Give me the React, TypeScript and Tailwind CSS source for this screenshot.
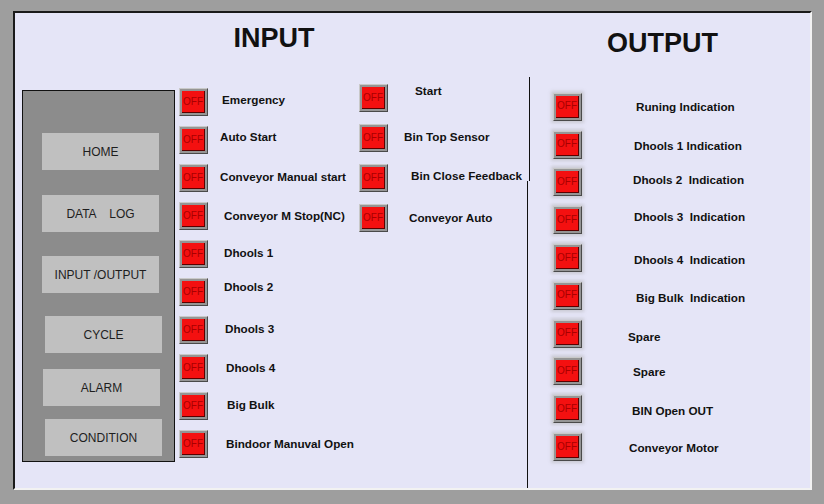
const font = "font-['Liberation_Sans',Arial,sans-serif]";

type Row = { label: string; lx: string; ly: string };

// left column of inputs
const inputsA: Row[] = [
  { label: "Emergency", lx: "ml-[14px]", ly: "mb-[4px]" },
  { label: "Auto Start", lx: "ml-[12px]", ly: "mb-[6px]" },
  { label: "Conveyor Manual start", lx: "ml-[12px]", ly: "mb-[2px]" },
  { label: "Conveyor M Stop(NC)", lx: "ml-[16px]", ly: "mb-0" },
  { label: "Dhools 1", lx: "ml-[16px]", ly: "mb-[2px]" },
  { label: "Dhools 2", lx: "ml-[16px]", ly: "mb-[10px]" },
  { label: "Dhools 3", lx: "ml-[17px]", ly: "mb-[2px]" },
  { label: "Dhools 4", lx: "ml-[18px]", ly: "mb-0" },
  { label: "Big Bulk", lx: "ml-[19px]", ly: "mb-[2px]" },
  { label: "Bindoor Manuval Open", lx: "ml-[18px]", ly: "mb-0" },
];

// second column of inputs
const inputsB: Row[] = [
  { label: "Start", lx: "ml-[27px]", ly: "mb-[14px]" },
  { label: "Bin Top Sensor", lx: "ml-[16px]", ly: "mb-[2px]" },
  { label: "Bin Close Feedback", lx: "ml-[23px]", ly: "mb-[4px]" },
  { label: "Conveyor Auto", lx: "ml-[21px]", ly: "mb-0" },
];

const outputs: Row[] = [
  { label: "Runing Indication", lx: "ml-[54px]", ly: "mb-0" },
  { label: "Dhools 1 Indication", lx: "ml-[52px]", ly: "mt-[2px]" },
  { label: "Dhools 2  Indication", lx: "ml-[51px]", ly: "mb-[6px]" },
  { label: "Dhools 3  Indication", lx: "ml-[52px]", ly: "mb-[8px]" },
  { label: "Dhools 4  Indication", lx: "ml-[52px]", ly: "mt-[4px]" },
  { label: "Big Bulk  Indication", lx: "ml-[54px]", ly: "mt-[4px]" },
  { label: "Spare", lx: "ml-[46px]", ly: "mt-[6px]" },
  { label: "Spare", lx: "ml-[51px]", ly: "mb-0" },
  { label: "BIN Open OUT", lx: "ml-[50px]", ly: "mt-[2px]" },
  { label: "Conveyor Motor", lx: "ml-[47px]", ly: "mt-[2px]" },
];

const navItems = [
  { label: "HOME", cls: "ml-[19px] mt-0" },
  { label: "DATA    LOG", cls: "ml-[19px] mt-[25px]" },
  { label: "INPUT /OUTPUT", cls: "ml-[19px] mt-[24px]" },
  { label: "CYCLE", cls: "ml-[22px] mt-[23px]" },
  { label: "ALARM", cls: "ml-[20px] mt-[16px]" },
  { label: "CONDITION", cls: "ml-[22px] mt-[13px]" },
];

const OffButton = ({ glow = false }: { glow?: boolean }) => (
  <div
    className={`flex h-[28px] w-[29px] shrink-0 border border-t-[#c9c9c9] border-l-[#c9c9c9] border-b-[#4a4a4a] border-r-[#4a4a4a] bg-[#959595] p-[2px] ${
      glow ? "shadow-[0_0_3px_2px_rgba(170,170,170,0.45)]" : ""
    }`}
  >
    <div className="flex flex-1 items-center justify-center border-b border-r border-b-[#5a0000] border-r-[#5a0000] bg-[#f41010]">
      <span className="text-[10px] leading-none text-[#a80000]">OFF</span>
    </div>
  </div>
);

const IoRow = ({ row, h, glow }: { row: Row; h: string; glow?: boolean }) => (
  <div className={`flex items-center ${h}`}>
    <OffButton glow={glow} />
    <span
      className={`whitespace-pre text-[11.7px] font-bold text-[#111] ${row.lx} ${row.ly}`}
    >
      {row.label}
    </span>
  </div>
);

export default function App() {
  return (
    <div className={`h-[504px] w-[824px] bg-[#9e9e9e] pl-[13px] pt-[11px] ${font}`}>
      <div className="flex h-[479px] w-[799px] border-2 border-t-[#1a1a1a] border-l-[#1a1a1a] border-b-[#f2f2f2] border-r-[#f2f2f2] bg-[#e5e5f7]">
        {/* INPUT side */}
        <div className="flex w-[512px] flex-col">
          <div className="h-[64px] pl-[6px] pt-[10px] text-center text-[27px] font-bold leading-[30px] text-[#111]">
            INPUT
          </div>
          <div className="flex flex-1">
            {/* menu */}
            <div className="ml-[7px] mt-[13px] flex h-[372px] w-[153px] flex-col border border-[#111] bg-[#8c8c8c] pt-[42px]">
              {navItems.map((n) => (
                <div
                  key={n.label}
                  className={`flex h-[37px] w-[117px] items-center justify-center whitespace-pre bg-[#c0c0c0] text-[12px] text-[#1e1e1e] ${n.cls}`}
                >
                  {n.label}
                </div>
              ))}
            </div>

            <div className="ml-[4px] mt-[6px] flex w-[180px] flex-col">
              {inputsA.map((r) => (
                <IoRow key={r.label} row={r} h="h-[38px]" />
              ))}
            </div>

            <div className="mt-[1px] flex flex-col">
              {inputsB.map((r) => (
                <IoRow key={r.label} row={r} h="h-[40px]" />
              ))}
            </div>
          </div>
        </div>

        {/* OUTPUT side */}
        <div className="flex flex-1 flex-col">
          <div className="h-[64px] pr-[12px] pt-[15px] text-center text-[27px] font-bold leading-[30px] text-[#111]">
            OUTPUT
          </div>
          <div className="flex flex-1">
            <div className="flex w-[3px] flex-col">
              <div className="h-[104px] border-r border-[#111]" />
              <div className="flex-1 border-l border-[#111]" />
            </div>
            <div className="flex flex-col pl-[23px] pt-[11px]">
              {outputs.map((r, i) => (
                <IoRow key={i} row={r} h="h-[37.8px]" glow />
              ))}
            </div>
          </div>
        </div>
      </div>
    </div>
  );
}
